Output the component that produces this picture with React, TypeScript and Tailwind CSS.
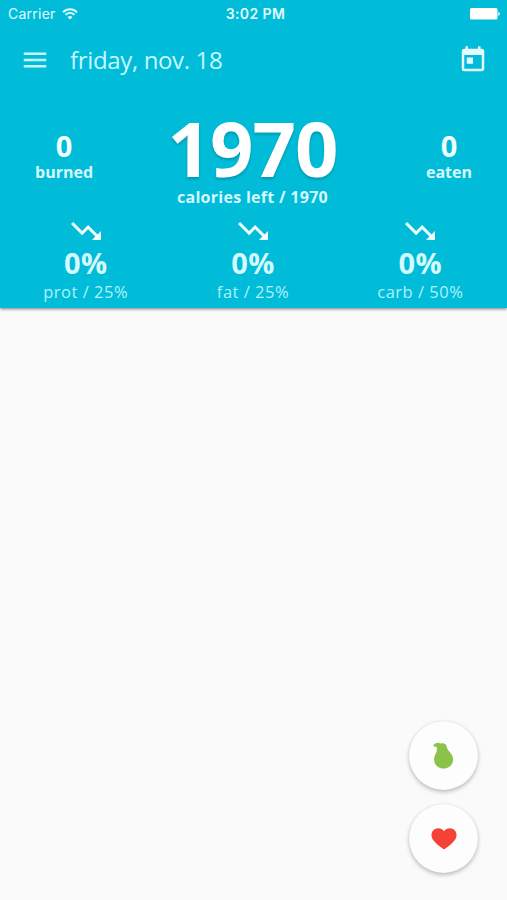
import React from 'react';
import { MdMenu, MdToday, MdTrendingDown } from 'react-icons/md';

const macros = [
  { name: 'prot', percent: '0%', target: '25%' },
  { name: 'fat', percent: '0%', target: '25%' },
  { name: 'carb', percent: '0%', target: '50%' },
];

const StatusBar = () => (
  <div className="grid h-[27px] grid-cols-3 items-center pl-2 pr-[7px] font-[Inter,sans-serif] text-[14px] leading-[27px] text-[#e0fbff]">
    <div className="flex items-center gap-1.5">
      <span className="tracking-[0.25px]">Carrier</span>
      <svg className="h-3 w-4" viewBox="0 0 16 12" fill="none" stroke="currentColor" strokeWidth="1.9">
        <path d="M1 4.2C5 .3 11 .3 15 4.2M3.5 6.8c2.6-2.4 6.4-2.4 9 0" />
        <path d="M5.5 8.9c1.5-1.3 3.5-1.3 5 0L8 11.5z" fill="currentColor" stroke="none" />
      </svg>
    </div>
    <div className="whitespace-nowrap pl-[3px] text-center font-semibold tracking-[0.4px]">3:02 PM</div>
    <svg className="h-3 w-[30px] justify-self-end" viewBox="0 0 30 12" fill="white">
      <rect width="27.5" height="11.5" rx="1.5" />
      <path d="M28.3 4c2 .3 2 3.4 0 3.8z" />
    </svg>
  </div>
);

const SideStat = ({ value, label }: { value: string; label: string }) => (
  <div className="w-[116px] pt-[39px] text-center font-bold">
    <div className="text-[29px] leading-[30px] text-[#f2feff]">{value}</div>
    <div className="text-[16px] leading-[22px] text-[#d5f9ff]">{label}</div>
  </div>
);

const Fab = ({ children }: { children: React.ReactNode }) => (
  <button className="flex h-[69px] w-[69px] items-center justify-center rounded-full bg-[#fdfdfd] shadow-[0_2px_4px_rgba(0,0,0,0.25),0_0_1px_rgba(0,0,0,0.12)]">
    {children}
  </button>
);

const App = () => {
  return (
    <div className="relative h-[900px] w-[507px] overflow-hidden bg-[#fafafa] font-['Open_Sans',sans-serif]">
      <header className="h-[308px] bg-[#00bcd9] shadow-[0_1px_3px_rgba(0,0,0,0.5)]">
        <StatusBar />
        <div className="flex h-[65px] items-center pl-5 pr-[19px] text-[#c9f7ff]">
          <MdMenu className="h-[30px] w-[30px]" />
          <h1 className="ml-5 flex-1 text-[24px] font-normal leading-8 tracking-[-0.35px]">friday, nov. 18</h1>
          <MdToday className="h-[30px] w-[30px] text-[#e3fbff]" />
        </div>

        <div className="flex justify-between pl-[6px]">
          <SideStat value="0" label="burned" />
          <div className="mr-[8px] pt-[18px] text-center font-bold">
            <div className="text-[76px] leading-[76px] tracking-[-1px] text-white [text-shadow:0_2px_3px_rgba(0,0,0,0.2)]">1970</div>
            <div className="pt-px text-[16px] leading-[21px] tracking-[0.28px] text-[#d5f9ff]">calories left / 1970</div>
          </div>
          <SideStat value="0" label="eaten" />
        </div>

        <div className="mt-[5px] grid grid-cols-3 pl-[2px] pr-[3px]">
          {macros.map((macro) => (
            <div key={macro.name} className="flex flex-col items-center text-center">
              <div className="h-[35px]">
                <MdTrendingDown className="h-9 w-9 text-[#effdff]" />
              </div>
              <div className="text-[29px] font-bold leading-[30px] tracking-[0.4px] text-[#d5f9ff]">{macro.percent}</div>
              <div className="text-[16.5px] leading-7 tracking-[0.5px] text-[#b0f1fb]">
                {macro.name} / {macro.target}
              </div>
            </div>
          ))}
        </div>
      </header>

      <div className="absolute bottom-[27px] right-[29px] flex flex-col gap-[14px]">
        <Fab>
          <svg className="h-[27px] w-[21px]" viewBox="0 0 21 27" fill="#8bc34a">
            <path d="M.2 3.6C1.4 1.2 3 .6 4.8 1L6 .2l.8 1.5C8.500 1.2 11 1.1 12.2 2c1.500 1.2 1.500 3.400 2.600 5.400 1.600 2.800 5.300 5.100 5.300 10 0 5.300-4.100 9.100-9.500 9.100S1.100 22.700 1.100 17.600c0-4.400 2.400-6.200 2.700-9.100.2-1.500-.2-2.400.2-3.700-1.500.3-2.800-.1-3.800-1.200z" />
          </svg>
        </Fab>
        <Fab>
          <svg className="h-[22px] w-[26px]" viewBox="0 0 26 22" fill="#f44336">
            <path d="M13 3.300C11 .1 6.700-.5 3.600 1.300.1 3.400-.4 8.200 1.800 11.600 4.300 15.600 9 18.700 13 21.500c4-2.800 8.700-5.900 11.200-9.900 2.200-3.400 1.700-8.200-1.800-10.300C19.300-.5 15 .1 13 3.300z" />
          </svg>
        </Fab>
      </div>
    </div>
  );
};

export default App;
